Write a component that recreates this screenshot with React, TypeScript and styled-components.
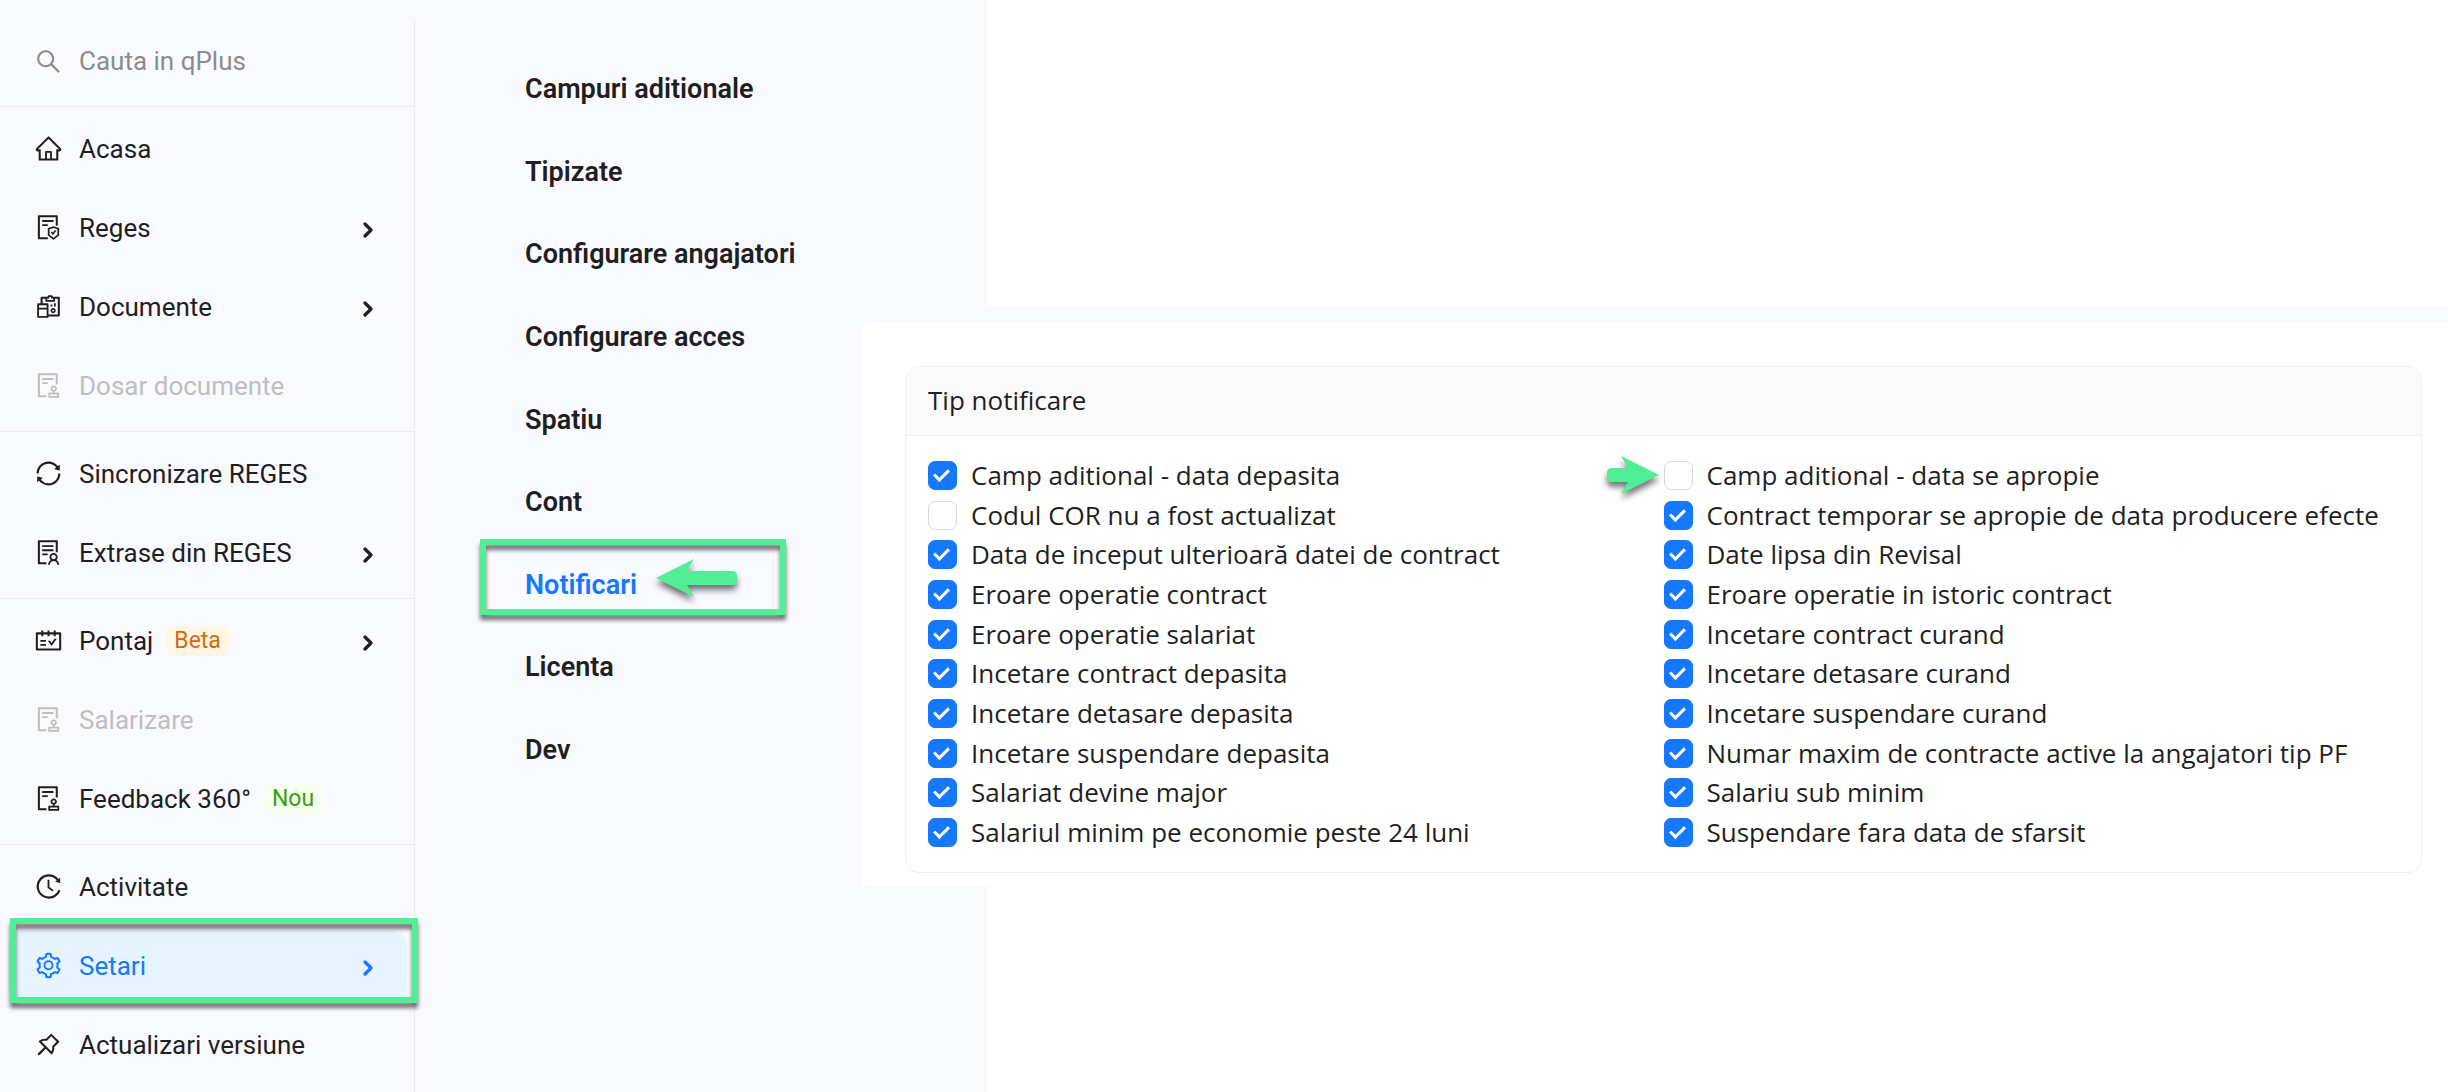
import React, { useState } from "react";
import styled, { createGlobalStyle, css } from "styled-components";
import type { IconType } from "react-icons";
import {
  AiOutlineAudit,
  AiOutlineFileProtect,
  AiOutlineHistory,
  AiOutlineHome,
  AiOutlinePushpin,
  AiOutlineReconciliation,
  AiOutlineSchedule,
  AiOutlineSearch,
  AiOutlineSetting,
  AiOutlineSolution,
  AiOutlineSync,
} from "react-icons/ai";

const color = {
  text: "#1f1f1f",
  muted: "#8c8c8c",
  disabled: "#bfbfbf",
  primary: "#1677ff",
  primarySoft: "#e6f4ff",
  surface: "#f9faff",
  line: "#ececf0",
  card: "#f0f0f0",
  marker: "#52ee95",
};

const navFont = `Roboto, "Liberation Sans", sans-serif`;
const bodyFont = `"Open Sans", "Noto Sans", sans-serif`;

const GlobalStyle = createGlobalStyle`
  *, *::before, *::after { box-sizing: border-box; }
  body { margin: 0; background: #fff; color: ${color.text}; }
`;

const Page = styled.div`
  display: grid;
  grid-template-columns: 415px 447px 126px minmax(0, 1fr);
  grid-template-rows: 306px auto 1fr;
  min-height: 100vh;
`;

/* ---------- main navigation ---------- */

const NavColumn = styled.aside`
  grid-column: 1;
  grid-row: 1 / -1;
  z-index: 1;
  display: flex;
  padding-top: 19px;
  background: ${color.surface};
  font-family: ${navFont};
`;

const Nav = styled.nav`
  flex: 1;
  min-width: 0;
  border-right: 1px solid ${color.line};
`;

const SearchBox = styled.label`
  display: flex;
  align-items: center;
  gap: 16px;
  height: 87px;
  padding: 0 34px 3px;
  color: ${color.muted};
`;

const SearchInput = styled.input`
  flex: 1;
  min-width: 0;
  padding: 0;
  border: 0;
  outline: 0;
  background: transparent;
  font: 400 26px/32px ${navFont};
  color: ${color.text};
  &::placeholder {
    color: ${color.muted};
    opacity: 1;
  }
`;

const NavGroup = styled.ul`
  margin: 0;
  padding: 2px 7px 6px 8px;
  border-top: 1px solid ${color.line};
  list-style: none;
  &:last-child {
    padding-bottom: 0;
  }
`;

const NavItem = styled.li`
  position: relative;
  padding: 4px 0;
`;

const NavLink = styled.a<{ $state?: "active" | "disabled" }>`
  display: flex;
  align-items: center;
  height: 71px;
  padding: 0 34px 0 26px;
  border-radius: 16px;
  font-size: 26px;
  line-height: 32px;
  color: ${color.text};
  text-decoration: none;
  white-space: nowrap;
  ${(p) =>
    p.$state === "active" &&
    css`
      color: ${color.primary};
      background: ${color.primarySoft};
    `}
  ${(p) =>
    p.$state === "disabled" &&
    css`
      color: ${color.disabled};
    `}
`;

const IconSlot = styled.span`
  display: flex;
  flex: none;
  width: 29px;
  font-size: 29px;
`;

const NavText = styled.span`
  margin-left: 16px;
`;

const Tag = styled.span<{ $tone: "orange" | "green" }>`
  margin-left: 13px;
  padding: 0 8px;
  border-radius: 6px;
  font-size: 23px;
  line-height: 30px;
  color: ${(p) => (p.$tone === "orange" ? "#d46b08" : "#389e0d")};
  background: ${(p) => (p.$tone === "orange" ? "#fff7e6" : "#f6ffed")};
`;

const ChevronSvg = styled.svg`
  width: 10px;
  height: 16px;
  margin: 4px 0 0 auto;
`;

const Chevron = () => (
  <ChevronSvg viewBox="0 0 10 16" fill="none" aria-hidden="true">
    <path d="M2 2l6 6-6 6" stroke="currentColor" strokeWidth="3.2" strokeLinecap="round" strokeLinejoin="round" />
  </ChevronSvg>
);

/* ---------- green callouts ---------- */

const Frame = styled.span<{ $inset: string }>`
  position: absolute;
  z-index: 2;
  inset: ${(p) => p.$inset};
  border: 6px solid ${color.marker};
  filter: drop-shadow(0 5px 2px rgba(0, 0, 0, 0.55));
  pointer-events: none;
`;

const ArrowSvg = styled.svg<{ $left: number; $top: number }>`
  position: absolute;
  z-index: 2;
  left: ${(p) => p.$left}px;
  top: ${(p) => p.$top}px;
  overflow: visible;
  filter: drop-shadow(0 5px 3px rgba(0, 0, 0, 0.55));
  pointer-events: none;
`;

/* ---------- settings submenu ---------- */

const Submenu = styled.nav`
  grid-column: 2 / 4;
  grid-row: 1 / -1;
  padding: 48px 0 0 110px;
  background: ${color.surface};
  font-family: ${navFont};
`;

const SubList = styled.ul`
  display: flex;
  flex-direction: column;
  justify-content: space-between;
  min-height: 743px;
  margin: 0;
  padding: 0;
  list-style: none;
`;

const SubItem = styled.li`
  position: relative;
  width: 300px;
`;

const SubLink = styled.a<{ $active?: boolean }>`
  display: block;
  font-size: 27px;
  font-weight: 600;
  line-height: 82px;
  color: ${(p) => (p.$active ? color.primary : color.text)};
  text-decoration: none;
  white-space: nowrap;
`;

/* ---------- notification settings ---------- */

const Main = styled.main`
  grid-column: 3 / 5;
  grid-row: 2;
  z-index: 1;
  padding-top: 17px;
  background: ${color.surface};
  font-family: ${bodyFont};
`;

const Panel = styled.div`
  padding: 43px 26px 13px 43px;
  border-top-left-radius: 8px;
  background: #fff;
`;

const Card = styled.section`
  border: 1px solid ${color.card};
  border-radius: 14px;
  overflow: hidden;
`;

const CardTitle = styled.h2`
  margin: 0;
  padding: 0 22px 2px;
  border-bottom: 1px solid ${color.card};
  background: #fafafa;
  font-size: 26px;
  font-weight: 500;
  line-height: 66px;
`;

const Options = styled.div`
  display: grid;
  grid-template-columns: repeat(2, minmax(0, 1fr));
  padding: 20px 22px;
`;

const Column = styled.div`
  display: flex;
  flex-direction: column;
  justify-content: space-between;
  min-height: 396px;
`;

const Option = styled.label`
  position: relative;
  display: flex;
  align-items: center;
  gap: 14px;
  font-size: 26px;
  font-weight: 500;
  line-height: 39px;
  white-space: nowrap;
`;

const Checkbox = styled.input`
  appearance: none;
  display: grid;
  place-items: center;
  flex: none;
  width: 29px;
  height: 29px;
  margin: 0;
  border: 1px solid #d9d9d9;
  border-radius: 7px;
  background: #fff;
  &:checked {
    border-color: ${color.primary};
    background: ${color.primary};
  }
  &:checked::after {
    content: "";
    width: 9px;
    height: 15px;
    margin: 0 2px 4px 0;
    border: solid #fff;
    border-width: 0 3px 3px 0;
    transform: rotate(45deg);
  }
`;

type NavEntry = {
  label: string;
  icon: IconType;
  state?: "active" | "disabled";
  more?: boolean;
  tag?: { text: string; tone: "orange" | "green" };
};

const navGroups: NavEntry[][] = [
  [
    { label: "Acasa", icon: AiOutlineHome },
    { label: "Reges", icon: AiOutlineFileProtect, more: true },
    { label: "Documente", icon: AiOutlineReconciliation, more: true },
    { label: "Dosar documente", icon: AiOutlineAudit, state: "disabled" },
  ],
  [
    { label: "Sincronizare REGES", icon: AiOutlineSync },
    { label: "Extrase din REGES", icon: AiOutlineSolution, more: true },
  ],
  [
    { label: "Pontaj", icon: AiOutlineSchedule, more: true, tag: { text: "Beta", tone: "orange" } },
    { label: "Salarizare", icon: AiOutlineAudit, state: "disabled" },
    { label: "Feedback 360°", icon: AiOutlineAudit, tag: { text: "Nou", tone: "green" } },
  ],
  [
    { label: "Activitate", icon: AiOutlineHistory },
    { label: "Setari", icon: AiOutlineSetting, state: "active", more: true },
    { label: "Actualizari versiune", icon: AiOutlinePushpin },
  ],
];

const subEntries = [
  "Campuri aditionale",
  "Tipizate",
  "Configurare angajatori",
  "Configurare acces",
  "Spatiu",
  "Cont",
  "Notificari",
  "Licenta",
  "Dev",
];

const optionColumns = [
  [
    "Camp aditional - data depasita",
    "Codul COR nu a fost actualizat",
    "Data de inceput ulterioară datei de contract",
    "Eroare operatie contract",
    "Eroare operatie salariat",
    "Incetare contract depasita",
    "Incetare detasare depasita",
    "Incetare suspendare depasita",
    "Salariat devine major",
    "Salariul minim pe economie peste 24 luni",
  ],
  [
    "Camp aditional - data se apropie",
    "Contract temporar se apropie de data producere efecte",
    "Date lipsa din Revisal",
    "Eroare operatie in istoric contract",
    "Incetare contract curand",
    "Incetare detasare curand",
    "Incetare suspendare curand",
    "Numar maxim de contracte active la angajatori tip PF",
    "Salariu sub minim",
    "Suspendare fara data de sfarsit",
  ],
];

const highlighted = "Camp aditional - data se apropie";

export default function App() {
  const [off, setOff] = useState<string[]>(["Codul COR nu a fost actualizat", highlighted]);
  const toggle = (name: string) =>
    setOff((list) => (list.includes(name) ? list.filter((n) => n !== name) : [...list, name]));

  return (
    <>
      <GlobalStyle />
      <Page>
        <NavColumn>
          <Nav>
            <SearchBox>
              <IconSlot>
                <AiOutlineSearch />
              </IconSlot>
              <SearchInput type="text" placeholder="Cauta in qPlus" aria-label="Cauta in qPlus" />
            </SearchBox>
            {navGroups.map((group, i) => (
              <NavGroup key={i}>
                {group.map(({ label, icon: Icon, state, more, tag }) => (
                  <NavItem key={label}>
                    <NavLink href="#" $state={state} aria-disabled={state === "disabled"}>
                      <IconSlot>
                        <Icon />
                      </IconSlot>
                      <NavText>{label}</NavText>
                      {tag && <Tag $tone={tag.tone}>{tag.text}</Tag>}
                      {more && <Chevron />}
                    </NavLink>
                    {state === "active" && <Frame $inset="-8px -11px 2px 2px" />}
                  </NavItem>
                ))}
              </NavGroup>
            ))}
          </Nav>
        </NavColumn>

        <Submenu>
          <SubList>
            {subEntries.map((label) => {
              const active = label === "Notificari";
              return (
                <SubItem key={label}>
                  <SubLink href="#" $active={active}>
                    {label}
                  </SubLink>
                  {active && (
                    <>
                      <Frame $inset="-5px 39px 11px -45px" />
                      <ArrowSvg $left={131} $top={15} width="81" height="38" viewBox="0 0 81 38" aria-hidden="true">
                        <path
                          d="M0 19L38 0L31 12H76Q81 12 81 17V21Q81 26 76 26H31L38 38Z"
                          fill={color.marker}
                        />
                      </ArrowSvg>
                    </>
                  )}
                </SubItem>
              );
            })}
          </SubList>
        </Submenu>

        <Main>
          <Panel>
            <Card>
              <CardTitle>Tip notificare</CardTitle>
              <Options>
                {optionColumns.map((column, i) => (
                  <Column key={i}>
                    {column.map((name) => (
                      <Option key={name}>
                        <Checkbox type="checkbox" checked={!off.includes(name)} onChange={() => toggle(name)} />
                        {name}
                        {name === highlighted && (
                          <ArrowSvg $left={-57} $top={0} width="52" height="38" viewBox="0 0 52 38" aria-hidden="true">
                            <path
                              d="M52 19L14 0L21 12H5Q0 12 0 17V21Q0 26 5 26H21L14 38Z"
                              fill={color.marker}
                            />
                          </ArrowSvg>
                        )}
                      </Option>
                    ))}
                  </Column>
                ))}
              </Options>
            </Card>
          </Panel>
        </Main>
      </Page>
    </>
  );
}
